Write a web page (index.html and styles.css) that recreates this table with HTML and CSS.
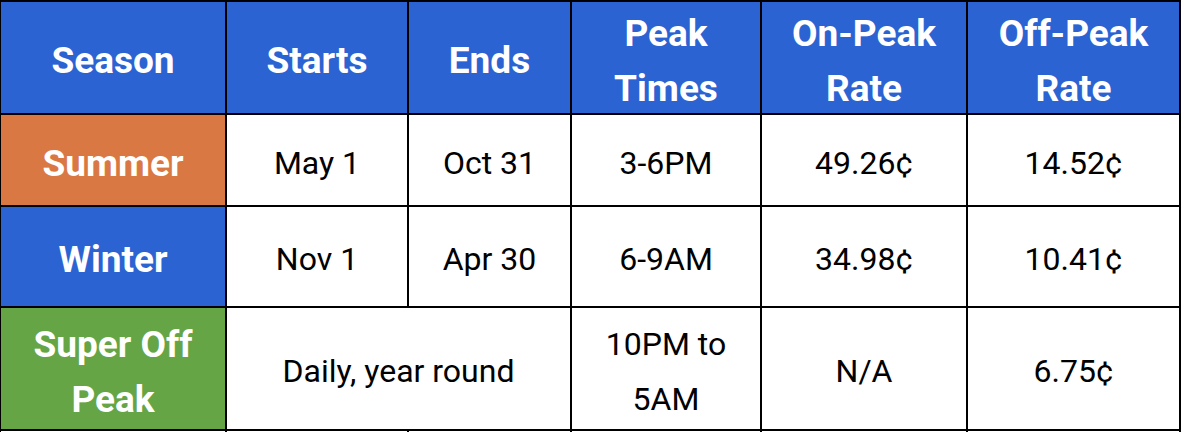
FILE: index.html
```html
<!DOCTYPE html>
<html>
<head>
<meta charset="utf-8">
<link rel="stylesheet" href="styles.css">
</head>
<body>
<table class="rates">
  <colgroup>
    <col class="c1"><col class="c2"><col class="c3"><col class="c4"><col class="c5"><col class="c6">
  </colgroup>
  <tr class="head">
    <th>Season</th>
    <th>Starts</th>
    <th>Ends</th>
    <th class="two"><span class="stack">Peak<br>Times</span></th>
    <th class="two"><span class="stack">On-Peak<br>Rate</span></th>
    <th class="two"><span class="stack">Off-Peak<br>Rate</span></th>
  </tr>
  <tr class="r-summer">
    <th class="season summer">Summer</th>
    <td>May 1</td>
    <td>Oct 31</td>
    <td>3-6PM</td>
    <td>49.26¢</td>
    <td>14.52¢</td>
  </tr>
  <tr class="r-winter">
    <th class="season winter">Winter</th>
    <td>Nov 1</td>
    <td>Apr 30</td>
    <td>6-9AM</td>
    <td>34.98¢</td>
    <td>10.41¢</td>
  </tr>
  <tr class="r-super">
    <th class="season super">Super Off<br>Peak</th>
    <td colspan="2">Daily, year round</td>
    <td>10PM to<br>5AM</td>
    <td>N/A</td>
    <td>6.75¢</td>
  </tr>
  <tr class="r-next">
    <td></td><td></td><td></td><td></td><td></td><td></td>
  </tr>
</table>
</body>
</html>
```
FILE: styles.css
```css
html, body {
  margin: 0;
  padding: 0;
  background: #ffffff;
  overflow: hidden;
}

.rates {
  border-collapse: collapse;
  table-layout: fixed;
  width: 1180px;
  margin: 0 0 0 -1px;
  font-family: Roboto, "Liberation Sans", Arial, sans-serif;
  color: #000000;
}

.c1 { width: 226px; }
.c2 { width: 182px; }
.c3 { width: 163px; }
.c4 { width: 190px; }
.c5 { width: 206px; }
.c6 { width: 213px; }

.rates th,
.rates td {
  border: 2px solid #000000;
  padding: 6px 0 0 0;
  text-align: center;
  vertical-align: middle;
  line-height: 55px;
}

.rates td {
  font-size: 32px;
  font-weight: 400;
}

.rates th {
  font-size: 37px;
  font-weight: 700;
  color: #ffffff;
}

.rates th.two {
  padding-top: 0;
}

.stack {
  display: block;
  height: 104px;
}

.head th {
  background: #2b63d3;
}

.head { height: 113px; }
.r-summer { height: 92px; }
.r-winter { height: 101px; }
.r-super { height: 123px; }

.rates .r-next td {
  height: 1px;
  padding: 0;
  line-height: 0;
  font-size: 0;
  border-bottom: 0;
}

.season.summer { background: #da7843; }
.season.winter { background: #2b63d3; }
.season.super { background: #65a545; }
```
